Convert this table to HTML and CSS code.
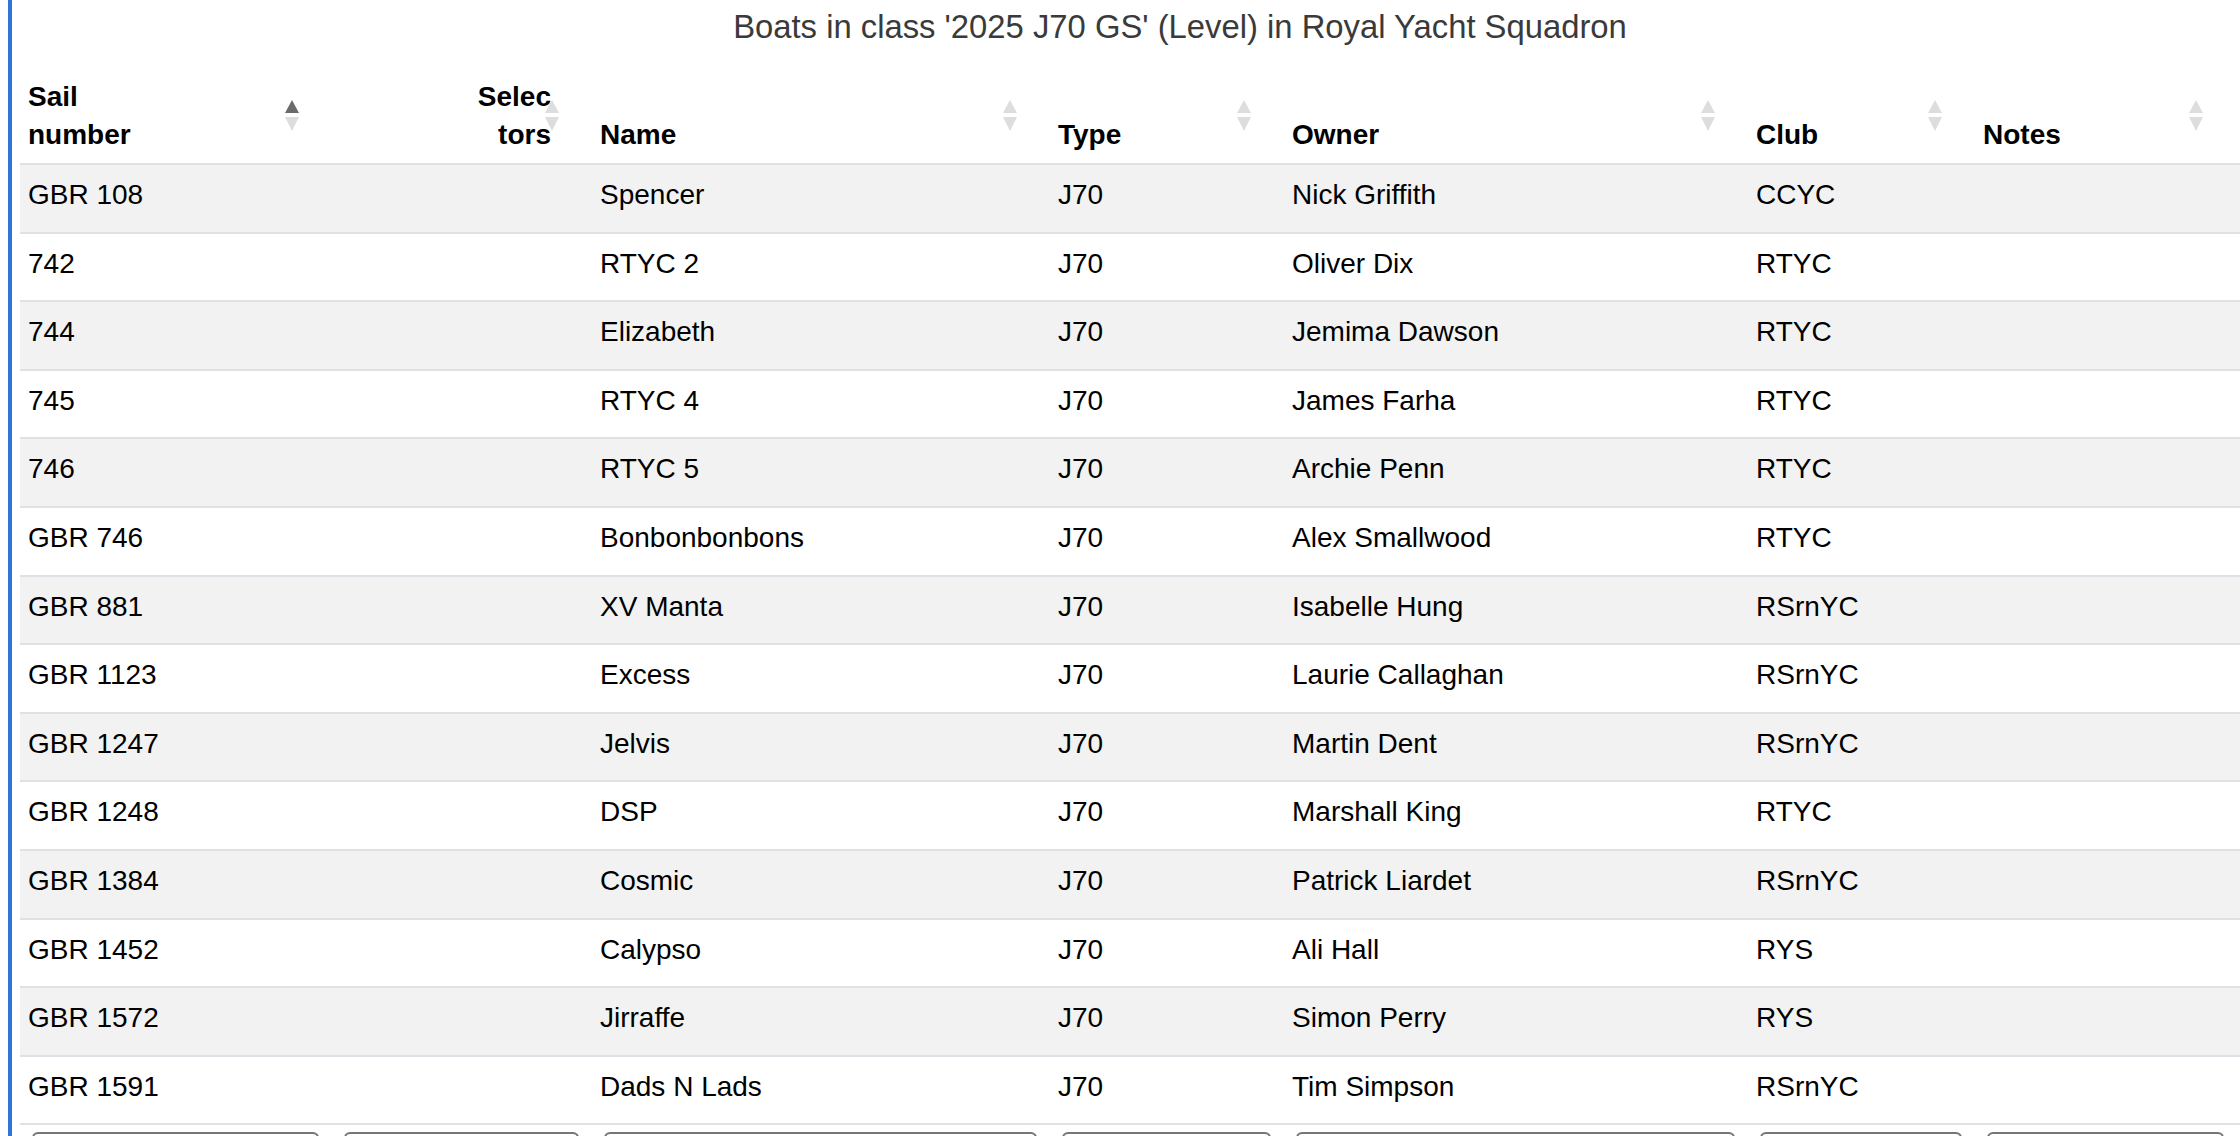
FILE: index.html
```html
<!DOCTYPE html>
<html lang="en">
<head>
<meta charset="utf-8">
<title>Boats in class</title>
<link rel="stylesheet" href="styles.css">
</head>
<body>
<div class="frame">
  <div class="content">
    <h1 class="title">Boats in class '2025 J70 GS' (Level) in Royal Yacht Squadron</h1>
    <table class="boats">
      <colgroup>
        <col class="c-sail"><col class="c-sel"><col class="c-name"><col class="c-type"><col class="c-owner"><col class="c-club"><col class="c-notes">
      </colgroup>
      <thead>
        <tr>
          <th class="sort asc">Sail<br>number</th>
          <th class="sort right">Selec<br>tors</th>
          <th class="sort">Name</th>
          <th class="sort">Type</th>
          <th class="sort">Owner</th>
          <th class="sort">Club</th>
          <th class="sort">Notes</th>
        </tr>
      </thead>
      <tbody>
        <tr><td>GBR 108</td><td></td><td>Spencer</td><td>J70</td><td>Nick Griffith</td><td>CCYC</td><td></td></tr>
        <tr><td>742</td><td></td><td>RTYC 2</td><td>J70</td><td>Oliver Dix</td><td>RTYC</td><td></td></tr>
        <tr><td>744</td><td></td><td>Elizabeth</td><td>J70</td><td>Jemima Dawson</td><td>RTYC</td><td></td></tr>
        <tr><td>745</td><td></td><td>RTYC 4</td><td>J70</td><td>James Farha</td><td>RTYC</td><td></td></tr>
        <tr><td>746</td><td></td><td>RTYC 5</td><td>J70</td><td>Archie Penn</td><td>RTYC</td><td></td></tr>
        <tr><td>GBR 746</td><td></td><td>Bonbonbonbons</td><td>J70</td><td>Alex Smallwood</td><td>RTYC</td><td></td></tr>
        <tr><td>GBR 881</td><td></td><td>XV Manta</td><td>J70</td><td>Isabelle Hung</td><td>RSrnYC</td><td></td></tr>
        <tr><td>GBR 1123</td><td></td><td>Excess</td><td>J70</td><td>Laurie Callaghan</td><td>RSrnYC</td><td></td></tr>
        <tr><td>GBR 1247</td><td></td><td>Jelvis</td><td>J70</td><td>Martin Dent</td><td>RSrnYC</td><td></td></tr>
        <tr><td>GBR 1248</td><td></td><td>DSP</td><td>J70</td><td>Marshall King</td><td>RTYC</td><td></td></tr>
        <tr><td>GBR 1384</td><td></td><td>Cosmic</td><td>J70</td><td>Patrick Liardet</td><td>RSrnYC</td><td></td></tr>
        <tr><td>GBR 1452</td><td></td><td>Calypso</td><td>J70</td><td>Ali Hall</td><td>RYS</td><td></td></tr>
        <tr><td>GBR 1572</td><td></td><td>Jirraffe</td><td>J70</td><td>Simon Perry</td><td>RYS</td><td></td></tr>
        <tr><td>GBR 1591</td><td></td><td>Dads N Lads</td><td>J70</td><td>Tim Simpson</td><td>RSrnYC</td><td></td></tr>
      </tbody>
      <tfoot>
        <tr>
          <td><input class="filter" type="text" aria-label="Filter Sail number"></td>
          <td><input class="filter" type="text" aria-label="Filter Selectors"></td>
          <td><input class="filter" type="text" aria-label="Filter Name"></td>
          <td><input class="filter" type="text" aria-label="Filter Type"></td>
          <td><input class="filter" type="text" aria-label="Filter Owner"></td>
          <td><input class="filter" type="text" aria-label="Filter Club"></td>
          <td><input class="filter" type="text" aria-label="Filter Notes"></td>
        </tr>
      </tfoot>
    </table>
  </div>
</div>
</body>
</html>
```
FILE: styles.css
```css
html, body {
  margin: 0;
  padding: 0;
  height: 100%;
  overflow: hidden;
  background: #ffffff;
}

body {
  font-family: "Liberation Sans", Arial, sans-serif;
  color: #000000;
}

.frame {
  margin-left: 8px;
  height: 100%;
  border-left: 4px solid #2f76d2;
  padding-left: 8px;
}

.content {
  width: 2320px;
}

.title {
  margin: 0 0 24px 0;
  padding-top: 7px;
  font-size: 32.8px;
  line-height: 40px;
  font-weight: normal;
  text-align: center;
  color: #3a3a3a;
}

.boats {
  width: 2220px;
  table-layout: fixed;
  border-collapse: collapse;
  border-spacing: 0;
  font-size: 28px;
}

.c-sail { width: 312px; }
.c-sel { width: 260px; }
.c-name { width: 458px; }
.c-type { width: 234px; }
.c-owner { width: 464px; }
.c-club { width: 227px; }
.c-notes { width: 265px; }

.boats th {
  position: relative;
  text-align: left;
  vertical-align: bottom;
  font-weight: bold;
  line-height: 38px;
  padding: 7px 41px 9px 8px;
  border-bottom: 2px solid #dee2e6;
}

.boats th.right {
  text-align: right;
}

.sort::before,
.sort::after {
  content: "";
  position: absolute;
  right: 33px;
  width: 0;
  height: 0;
  border-left: 7px solid transparent;
  border-right: 7px solid transparent;
}

.sort::before {
  top: calc(50% - 17px);
  border-bottom: 13px solid #dddddd;
}

.sort::after {
  top: 50%;
  border-top: 14px solid #dddddd;
}

.sort.asc::before {
  border-bottom-color: #6b6b6b;
}

.boats th:last-child::before,
.boats th:last-child::after {
  right: 37px;
}

.boats tbody td {
  padding: 13px 8px 19px 8px;
  line-height: 34.6px;
  border-bottom: 2px solid #dee2e6;
  white-space: nowrap;
  overflow: hidden;
}

.boats tbody tr:nth-child(odd) td {
  background: #f2f2f2;
}

.boats tfoot td {
  padding: 7px 13px 0 12px;
  vertical-align: top;
}

.boats tfoot td:last-child {
  padding-right: 16px;
}

.filter {
  display: block;
  box-sizing: border-box;
  width: 100%;
  height: 56px;
  margin: 0;
  border: 2px solid #767676;
  border-radius: 6px;
  background: #ffffff;
  font: inherit;
}
```
